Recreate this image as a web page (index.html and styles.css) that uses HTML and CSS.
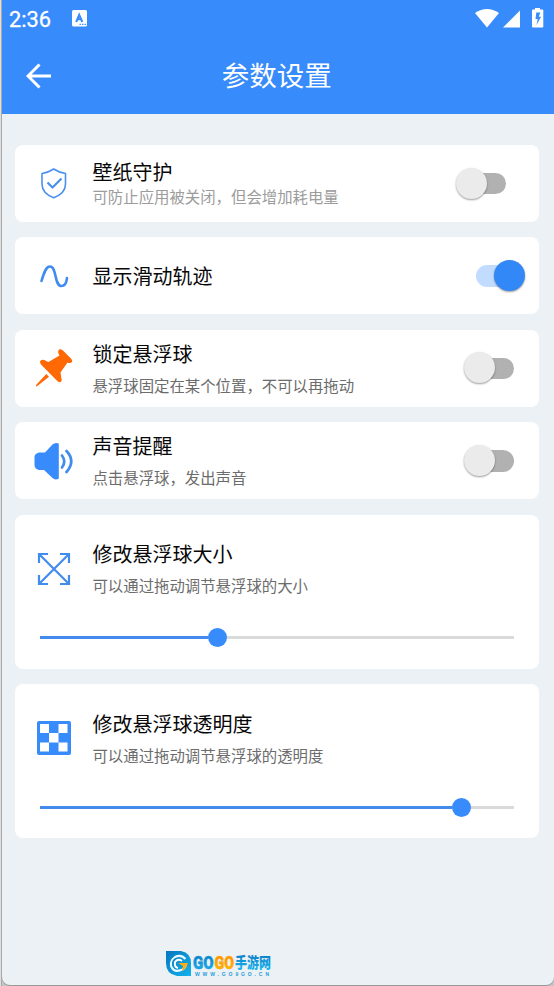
FILE: index.html
```html
<!DOCTYPE html>
<html lang="zh-CN">
<head>
<meta charset="utf-8">
<title>参数设置</title>
<link rel="stylesheet" href="styles.css">
</head>
<body>
<div class="phone">
  <header class="top">
    <div class="status">
      <span class="clock">2:36</span>
      <svg class="ime" width="15" height="17" viewBox="0 0 15 17"><rect width="15" height="16.5" rx="1.5" fill="#fff"/><path d="M4.2 12 7.2 4.8 10.3 12M5.3 9.3h4" fill="none" stroke="#378bfb" stroke-width="2"/><path d="M7.500 14.300h1.400M10 14.300h1.400M12.500 14.300h1.400" stroke="#378bfb" stroke-width="1.300"/></svg>
      <svg class="signals" width="70" height="22" viewBox="0 0 70 22" fill="#fff"><path d="M0 5Q12-3 24 5L12 19.500Z"/><path d="M45 2.500v17h-17Z"/><path d="M58 1.500h2V0h5v1.500H67.300q1 0 1 1v16q0 1-1 1H58q-1 0-1-1V2.500q0-1 1-1Z"/><path d="M61.300 4.500h4l-1.500 4.200h2.300L61.500 17l1.200-6h-2.200Z" fill="#378bfb"/></svg>
    </div>
    <div class="bar">
      <svg class="back" width="26" height="26" viewBox="0 0 26 26"><path d="M25 13H2.500M13.500 1.500 2 13l11.500 11.500" fill="none" stroke="#fff" stroke-width="3"/></svg>
      <h1>参数设置</h1>
    </div>
  </header>
  <main class="list">
    <section class="card guard">
      <div class="row">
        <svg class="icon" width="40" height="40" viewBox="0 0 40 40" fill="none" stroke="#4a90ef" stroke-width="1.600" stroke-linejoin="round"><path d="M19.700 5Q25 8.500 31.500 9.500V20C31.500 27 27 31 19.700 33.800C12.500 31 8 27 8 20V9.500Q14.500 8.500 19.700 5Z"/><path d="M13.500 18.500 18.500 23.500 27.500 14.500" stroke-width="2.200"/></svg>
        <div class="text"><h2>壁纸守护</h2><p>可防止应用被关闭，但会增加耗电量</p></div>
        <span class="switch"></span>
      </div>
    </section>
    <section class="card trail">
      <div class="row">
        <svg class="icon" width="40" height="40" viewBox="0 0 40 40" fill="none" stroke="#428cee" stroke-width="2.600" stroke-linecap="round"><path d="M7.500 25C11 13 13 10.500 16 10.500C23 10.500 20 30 27.500 30C31.500 30 32.500 27 33 22"/></svg>
        <div class="text"><h2>显示滑动轨迹</h2></div>
        <span class="switch on"></span>
      </div>
    </section>
    <section class="card">
      <div class="row">
        <svg class="icon" width="40" height="40" viewBox="0 0 40 40" fill="#ff6905"><path d="M25 1.500Q27.500 .5 29.500 3L37 10.500Q39.500 13.500 37 14.700Q35 15.500 33.500 14.500L26.500 24.500Q27 27 27.200 29.500Q28.500 32.500 27 33.800Q24.800 35 22.800 32.500L7 16.500Q5 13.500 7 12.300Q9.500 11 12 13L14.500 14L25.500 7.500Q23 3.500 25 1.500ZM12.300 26 15 28.700 4 37.500Q.5 40 2.500 36.500Z"/></svg>
        <div class="text"><h2>锁定悬浮球</h2><p>悬浮球固定在某个位置，不可以再拖动</p></div>
        <span class="switch"></span>
      </div>
    </section>
    <section class="card">
      <div class="row">
        <svg class="icon" width="40" height="40" viewBox="0 0 40 40" fill="#378bfb"><path d="M5 11.500H11L18.500 3.500Q21 1 24.800 2.500V37.500Q21 39.500 18.500 37L10 29H5Q.5 28 .5 24V16Q.5 12.500 5 11.500Z"/><path d="M28 14.500Q32.500 20.500 28 26.500M32.500 10Q42 20 32.500 31" fill="none" stroke="#428cee" stroke-width="2.700" stroke-linecap="round"/></svg>
        <div class="text"><h2>声音提醒</h2><p>点击悬浮球，发出声音</p></div>
        <span class="switch"></span>
      </div>
    </section>
    <section class="card tall">
      <div class="row">
        <svg class="icon" width="40" height="40" viewBox="0 0 40 40" fill="none" stroke="#428cee" stroke-width="2.200"><path d="M5 5 35 35M35 5 5 35M5 14V5H14M26 5H35V14M35 26V35H26M14 35H5V26"/></svg>
        <div class="text"><h2>修改悬浮球大小</h2><p>可以通过拖动调节悬浮球的大小</p></div>
      </div>
      <div class="slider size"><span class="fill"></span><span class="knob"></span></div>
    </section>
    <section class="card tall">
      <div class="row">
        <svg class="icon" width="40" height="40" viewBox="0 0 40 40"><rect x="3" y="3" width="34" height="34" rx="2" fill="#378bfb"/><path d="M6 6h9v9H6ZM24.500 6h9v9h-9ZM15 15h9.500v9.500H15ZM6 24.500h9v9H6ZM24.500 24.500h9v9h-9Z" fill="#fff"/></svg>
        <div class="text"><h2>修改悬浮球透明度</h2><p>可以通过拖动调节悬浮球的透明度</p></div>
      </div>
      <div class="slider opacity"><span class="fill"></span><span class="knob"></span></div>
    </section>
  </main>
  <footer class="brand">
    <svg width="25" height="25" viewBox="0 0 25 25"><defs><linearGradient id="b" x2="1" y2="1"><stop stop-color="#0875be"/><stop offset="1" stop-color="#12b4ed"/></linearGradient></defs><path d="M0 0H15Q25 2 25 12V25H11Q0 23 0 12Z" fill="url(#b)"/><path d="M19.500 8Q15 3 9 6Q4 9 5 15Q8 22 15 19Q19 18 20 14" fill="none" stroke="#eaf9ff" stroke-width="2"/><path d="M16 10Q12 7 9 11Q8 16 12 17" fill="none" stroke="#fff" stroke-width="2"/><path d="M12 12H22Q20 18 16 20L17 15Z" fill="#ffac16"/></svg>
    <svg class="brandtext" width="84" height="28" viewBox="0 0 84 28">
      <defs>
        <linearGradient id="blue" x2="0" y2="1"><stop stop-color="#0870bd"/><stop offset="1" stop-color="#1bbcf3"/></linearGradient>
        <linearGradient id="gold" x2="0" y2="1"><stop stop-color="#ff8500"/><stop offset="1" stop-color="#ffc000"/></linearGradient>
      </defs>
      <text class="go" x="0" y="17.500" textLength="20.500" lengthAdjust="spacingAndGlyphs" fill="url(#blue)" stroke="#1595d8">GO</text>
      <text class="go" x="21.500" y="17.500" textLength="19.500" lengthAdjust="spacingAndGlyphs" fill="url(#gold)" stroke="#ffa300">GO</text>
      <text class="zh" x="42" y="16.500" textLength="36" lengthAdjust="spacingAndGlyphs" fill="url(#blue)">手游网</text>
      <text class="url" x="2" y="25" textLength="74">WWW.GO9GO.CN</text>
    </svg>
  </footer>
</div>
</body>
</html>
```
FILE: styles.css
```css
* { box-sizing: border-box; }
html { background: #d2d3d4; }
body {
  margin: 0;
  height: 986px;
  overflow: hidden;
  font-family: "Noto Sans CJK SC", sans-serif;
  background: linear-gradient(90deg, #dedede 1px, #aaa 1px, #aaa 2px, #c4c4c4 2px);
}
h1, h2, p { margin: 0; font-weight: 400; white-space: nowrap; }
svg { display: block; flex: none; }
.phone {
  margin-left: 2px;
  height: 985px;
  display: flex;
  flex-direction: column;
  background: #ebf1f4;
  border-radius: 0 0 8px 8px;
  box-shadow: 0 1px 0 #999;
}
.top { height: 114px; background: #378bfb; color: #fff; flex: none; }
.status { height: 38px; display: flex; align-items: center; padding: 0 9px 0 7px; }
.clock { width: 63px; font: 400 21.800px/24px Roboto, sans-serif; padding-top: 2px; -webkit-text-stroke: .3px #fff; }
.ime { margin-top: -1px; }
.signals { margin-left: auto; }
.bar { height: 76px; display: grid; grid-template-columns: 50px 1fr 50px; align-items: center; }
.back { margin-left: 24px; }
.bar h1 { text-align: center; font-size: 27.500px; line-height: 40px; margin: -4px 2.500px 0 0; }
.list { padding: 31px 15.300px 0 13.400px; display: grid; gap: 15.450px; }
.card { height: 77px; background: #fff; border-radius: 8px; padding: 0 24.700px 0 18.700px; }
.row { height: 77px; display: flex; align-items: center; }
.text { margin-left: 18.400px; flex: 1; }
h2 { color: #080808; font-size: 20px; line-height: 24px; }
p { color: #6c6c6c; font-size: 15.400px; line-height: 20px; margin-top: 9px; }
.guard { padding-right: 32.400px; }
.guard .text { margin-top: -1px; }
.guard p { color: #9c9c9c; margin-top: 1.500px; }
.trail { padding-right: 13px; }
.switch { width: 50px; height: 32px; flex: none; display: flex; align-items: center; position: relative; }
.switch::before { content: ""; width: 44px; height: 21.500px; margin-left: 6px; border-radius: 11px; background: #b1b1b1; }
.switch::after {
  content: ""; position: absolute; left: -.5px; top: 0;
  width: 31px; height: 31px; border-radius: 50%;
  background: #ebebeb; box-shadow: 0 1px 2px rgba(0, 0, 0, .4);
}
.switch.on::before { margin-left: 0; background: #c2dcff; }
.switch.on::after { left: 18.500px; background: #3388f7; }
.tall { height: 154px; padding-top: 15.500px; }
.slider { height: 20px; margin: 20.500px 0 0 6px; display: flex; align-items: center; background: linear-gradient(#dadada, #dadada) center / 100% 3px no-repeat; }
.fill { height: 3px; background: #428aec; }
.knob { width: 19px; height: 19px; border-radius: 50%; background: #378bfb; }
.size .fill { width: 168.300px; }
.opacity .fill { width: 412px; }
.brand { display: flex; margin: auto 0 6px 164px; }
.brandtext { margin-left: 2px; }
.go { font: 900 19px Roboto, sans-serif; stroke-width: .5px; }
.zh { font-size: 15px; font-weight: 900; }
.url { font: 700 5px "Liberation Sans", sans-serif; fill: #299bdd; }
```
